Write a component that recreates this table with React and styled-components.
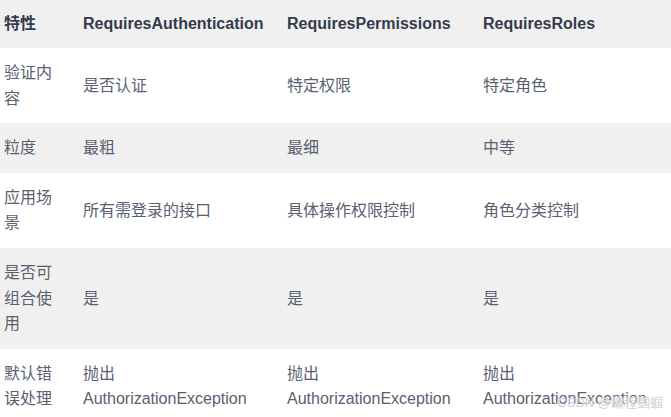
import styled, { createGlobalStyle } from "styled-components";

const GlobalStyle = createGlobalStyle`
  html, body {
    margin: 0;
    padding: 0;
    background: #fff;
  }
  body {
    font-family: "Liberation Sans", Arial, "Noto Sans CJK SC", sans-serif;
  }
`

const rows = [
  ["验证内容", "是否认证", "特定权限", "特定角色"],
  ["粒度", "最粗", "最细", "中等"],
  ["应用场景", "所有需登录的接口", "具体操作权限控制", "角色分类控制"],
  ["是否可组合使用", "是", "是", "是"],
  ["默认错误处理", "抛出 AuthorizationException", "抛出 AuthorizationException", "抛出 AuthorizationException"],
]

export default function App() {
  return (
    <Page>
      <GlobalStyle />
      <Table>
        <colgroup>
          <col style={{ width: 71 }} />
          <col style={{ width: 204 }} />
          <col style={{ width: 196 }} />
          <col />
        </colgroup>
        <thead>
          <tr>
            <Th>特性</Th>
            <Th>RequiresAuthentication</Th>
            <Th>RequiresPermissions</Th>
            <Th>RequiresRoles</Th>
          </tr>
        </thead>
        <tbody>
          {rows.map((row, i) => (
            <Row key={row[0]} $striped={i % 2 === 1}>
              {row.map((cell, j) => (
                <Td key={j}>
                  {cell.includes(" ")
                    ? cell.split(" ").map((part, k) => <Line key={k}>{part}</Line>)
                    : cell}
                </Td>
              ))}
            </Row>
          ))}
        </tbody>
      </Table>
      <Watermark>CSDN @编程蝈蝈</Watermark>
    </Page>
  )
}

const Page = styled.div`
  position: relative;
  width: 671px;
  height: 417px;
  overflow: hidden;
`
const Table = styled.table`
  width: 100%;
  border-collapse: collapse;
  table-layout: fixed;
  font-size: 16px;
`
const Th = styled.th`
  background: #f0f0f0;
  color: #343c4b;
  font-weight: 700;
  text-align: left;
  line-height: 24px;
  padding: 12px;
  &:first-child {
    padding-left: 4px;
  }
`
const Row = styled.tr`
  background: ${(props) => (props.$striped ? "#f0f0f0" : "#fff")};
`
const Td = styled.td`
  color: #596171;
  line-height: 1.6;
  padding: 12px;
  vertical-align: middle;
  text-align: left;
  &:first-child {
    padding-left: 4px;
  }
`
const Line = styled.span`
  display: block;
  white-space: nowrap;
`
const Watermark = styled.div`
  position: absolute;
  right: 8px;
  bottom: 6px;
  font-size: 13px;
  color: rgba(190, 194, 200, 0.75);
  text-shadow: 0 0 2px #fff, 0 0 1px #fff;
  font-family: "Liberation Sans", "Noto Sans CJK SC", sans-serif;
`
